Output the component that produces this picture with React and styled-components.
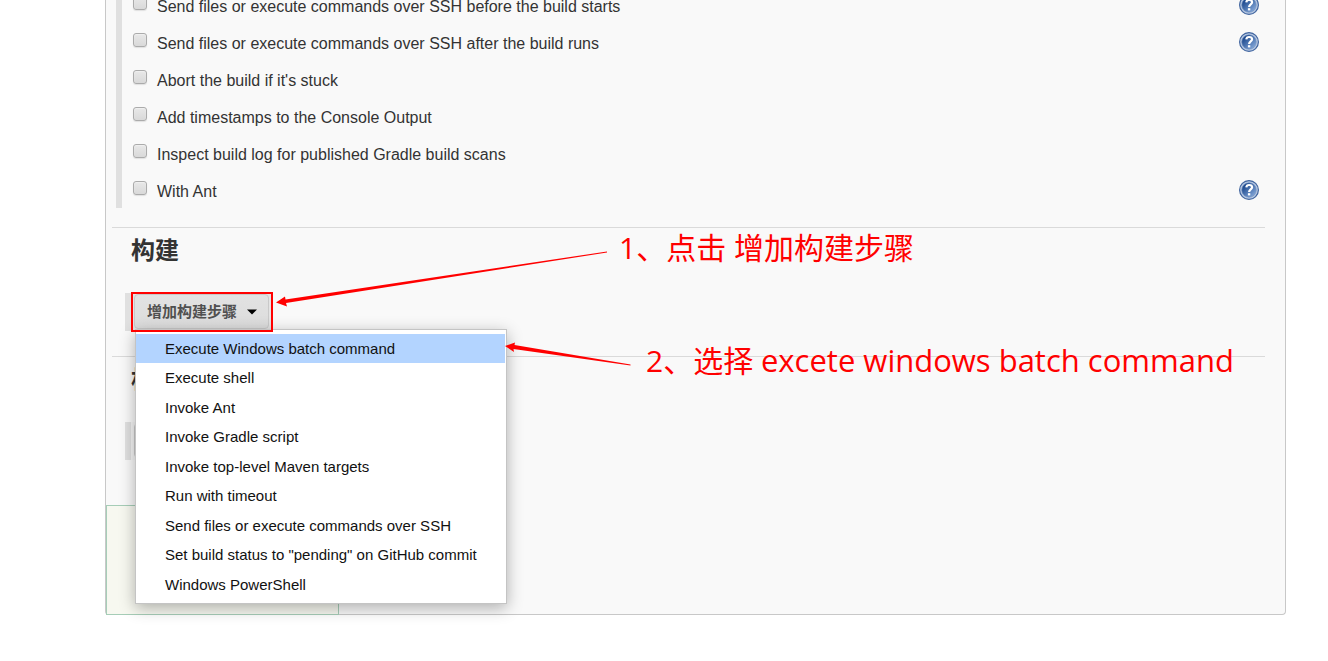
import React from "react";
import styled, { createGlobalStyle } from "styled-components";

const GlobalStyle = createGlobalStyle`
  *, *::before, *::after { box-sizing: border-box; }
  html { overflow-x: hidden; }
  body {
    margin: 0;
    background: #fff;
    color: #333;
    font: 16px/20px "Liberation Sans", Arial, "Noto Sans CJK SC", sans-serif;
  }
`;

const Page = styled.main`
  position: relative;
  overflow: hidden;
  padding: 0 42px 46px 105px;
`;

const ConfigPanel = styled.form`
  display: flex;
  flex-direction: column;
  background: #f9f9f9;
  border: 1px solid #c8c8c8;
  border-top: 0;
  border-radius: 0 0 4px 4px;
`;

const OptionList = styled.ul`
  list-style: none;
  margin: -14px 20px 19px 10px;
  padding: 0 6px 0 11px;
  border-left: 6px solid #e0e0e0;
`;

const OptionRow = styled.li`
  display: flex;
  justify-content: space-between;
  align-items: flex-start;
  height: 37px;
  padding-top: 9px;
`;

const OptionLabel = styled.label`
  display: flex;
  align-items: flex-start;
  gap: 10px;
  line-height: 24px;
`;

const Checkbox = styled.input`
  appearance: none;
  width: 14px;
  height: 14px;
  margin: 1px 0 0;
  border: 1px solid #ababab;
  border-radius: 3px;
  background: linear-gradient(#e8e8e8, #d9d9d9);
  box-shadow: inset 0 1px 1px #f0f0f0, 0 1px 1px #e0e0e0;
`;

const HelpButton = styled.button`
  display: block;
  width: 20px;
  height: 20px;
  padding: 0;
  border: 0;
  background: none;
`;

const Section = styled.section`
  height: 129px;
  margin: 0 20px 0 6px;
  padding-left: 13px;
  border-top: 1px solid #dadada;
`;

const SectionTitle = styled.h2`
  margin: 0;
  padding: 5px 0 0 6px;
  font-size: 24px;
  line-height: 36px;
  font-weight: 700;
`;

const StepArea = styled.div`
  position: relative;
  width: max-content;
  height: 38px;
  margin-top: 24px;
  padding: 1px 3px 3px;
  border-left: 6px solid #e0e0e0;
  background: ${(p) => (p.$open ? "#e4e4e4" : "#f4f4f4")};
`;

const StepButton = styled.button`
  display: flex;
  align-items: center;
  gap: 10px;
  height: 35px;
  padding: 0 11px 0 12px;
  border: 1px solid #c9c9c9;
  border-radius: 4px;
  background: linear-gradient(#e2e2e2, #dcdcdc);
  color: #505050;
  font: 700 15px/20px "Liberation Sans", "Noto Sans CJK SC", sans-serif;
`;

const Menu = styled.ul`
  position: absolute;
  z-index: 2;
  top: 36px;
  left: 4px;
  width: 372px;
  margin: 0;
  padding: 4px 1px 4px 0;
  list-style: none;
  background: #fff;
  border: 1px solid #c4c4c4;
  box-shadow: 0 4px 15px rgba(0, 0, 0, 0.3);
`;

const MenuItem = styled.li`
  height: 29px;
  &:nth-child(even) { height: 30px; }
`;

const MenuButton = styled.button`
  display: block;
  width: 100%;
  height: 100%;
  padding: 0 0 0 29px;
  border: 0;
  background: ${(p) => (p.$active ? "#b3d4ff" : "transparent")};
  color: #111;
  font: 15px/28px "Liberation Sans", Arial, sans-serif;
  text-align: left;
  white-space: nowrap;
`;

const SaveBar = styled.footer`
  width: 233px;
  height: 110px;
  margin: 20px 0 -1px;
  background: #f7f8f0;
  border: 1px solid #a6cdb7;
`;

const Highlight = styled.div`
  position: absolute;
  z-index: 3;
  top: -1px;
  left: 0;
  right: -1px;
  height: 40px;
  border: 2px solid #f00;
  pointer-events: none;
`;

const Note = styled.p`
  position: absolute;
  z-index: 4;
  top: ${(p) => p.$top}px;
  left: ${(p) => p.$left}px;
  margin: 0;
  color: #f00;
  font: 30px/40px "Open Sans", "Noto Sans CJK SC", sans-serif;
  white-space: nowrap;
`;

const Command = styled.span`
  font-size: 31px;
`;

const Arrows = styled.svg`
  position: absolute;
  z-index: 4;
  top: 240px;
  left: 270px;
  pointer-events: none;
`;

const options = [
  ["Send files or execute commands over SSH before the build starts", true],
  ["Send files or execute commands over SSH after the build runs", true],
  ["Abort the build if it's stuck", false],
  ["Add timestamps to the Console Output", false],
  ["Inspect build log for published Gradle build scans", false],
  ["With Ant", true],
];

const steps = [
  "Execute Windows batch command",
  "Execute shell",
  "Invoke Ant",
  "Invoke Gradle script",
  "Invoke top-level Maven targets",
  "Run with timeout",
  "Send files or execute commands over SSH",
  'Set build status to "pending" on GitHub commit',
  "Windows PowerShell",
];

function HelpIcon() {
  return (
    <svg width="20" height="20" viewBox="0 0 20 20" aria-hidden="true">
      <defs>
        <linearGradient id="helpFill" x1="0" y1="0" x2="1" y2="1">
          <stop offset="0.2" stopColor="#1f4b90" />
          <stop offset="0.9" stopColor="#86a9da" />
        </linearGradient>
      </defs>
      <circle cx="10" cy="10" r="9.4" fill="#b9cae4" stroke="#41659f" strokeWidth="1.2" />
      <circle cx="10" cy="10" r="7.3" fill="url(#helpFill)" stroke="#7793c0" strokeWidth="0.6" />
      <path d="M7.3 7.400C7.500 5.700 8.500 5 10.100 5c1.800 0 3 .8 3 2.300 0 2.100-3 2.200-3 4.700" fill="none" stroke="#fff" strokeWidth="2.200" />
      <rect x="8.900" y="13.200" width="2.400" height="2.200" fill="#fff" />
    </svg>
  );
}

function Caret() {
  return (
    <svg width="10" height="6" viewBox="0 0 10 6" aria-hidden="true">
      <path d="M0 0.500H10L5 5.500Z" fill="#000" />
    </svg>
  );
}

export default function App() {
  return (
    <Page>
      <GlobalStyle />
      <ConfigPanel onSubmit={(e) => e.preventDefault()}>
        <OptionList>
          {options.map(([text, help], i) => (
            <OptionRow key={text}>
              <OptionLabel htmlFor={`option-${i}`}>
                <Checkbox type="checkbox" id={`option-${i}`} />
                {text}
              </OptionLabel>
              {help && (
                <HelpButton type="button" aria-label={`Help: ${text}`}>
                  <HelpIcon />
                </HelpButton>
              )}
            </OptionRow>
          ))}
        </OptionList>
        <Section>
          <SectionTitle>构建</SectionTitle>
          <StepArea $open>
            <StepButton type="button" aria-haspopup="menu" aria-expanded="true">
              增加构建步骤
              <Caret />
            </StepButton>
            <Highlight />
            <Menu>
              {steps.map((step, i) => (
                <MenuItem key={step}>
                  <MenuButton type="button" $active={i === 0}>{step}</MenuButton>
                </MenuItem>
              ))}
            </Menu>
          </StepArea>
        </Section>
        <Section>
          <SectionTitle>构建后操作</SectionTitle>
          <StepArea>
            <StepButton type="button">
              增加构建后操作步骤
              <Caret />
            </StepButton>
          </StepArea>
        </Section>
        <SaveBar />
      </ConfigPanel>
      <Note $top={228} $left={619}>1、点击 增加构建步骤</Note>
      <Note $top={340} $left={646}>
        2、选择 <Command>excete windows batch command</Command>
      </Note>
      <Arrows width="364" height="130" viewBox="270 240 364 130" aria-hidden="true">
        <path d="M276 302.500L285 296.500L285.500 299.500L607 251.500V252.500L286 303L287 306.500Z" fill="#f00" />
        <path d="M505 346L515 342.500L514.500 345L630.500 364.500V365.500L513.500 349L514 352Z" fill="#f00" />
      </Arrows>
    </Page>
  );
}
